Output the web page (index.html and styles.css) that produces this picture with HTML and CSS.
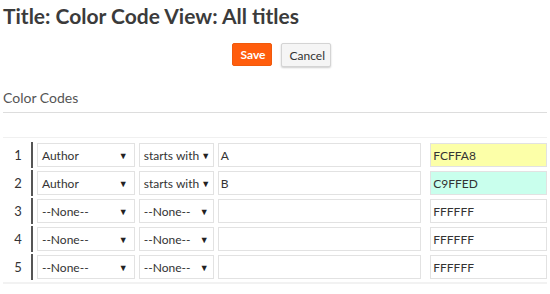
FILE: index.html
```html
<!DOCTYPE html>
<html>
<head>
<meta charset="utf-8">
<link rel="stylesheet" href="styles.css">
</head>
<body>
<h1 class="title">Title: Color Code View: All titles</h1>
<div class="actions">
  <button class="btn btn-save">Save</button>
  <button class="btn btn-cancel">Cancel</button>
</div>
<h2 class="section">Color Codes</h2>
<div class="rows">
  <div class="row">
    <span class="num">1</span><span class="bar"></span>
    <div class="sel sel-field"><span>Author</span><span class="arrow">▼</span></div>
    <div class="sel sel-op"><span>starts with</span><span class="arrow">▼</span></div>
    <div class="inp inp-val">A</div>
    <div class="inp inp-color" style="background:#FCFFA8">FCFFA8</div>
  </div>
  <div class="row">
    <span class="num">2</span><span class="bar"></span>
    <div class="sel sel-field"><span>Author</span><span class="arrow">▼</span></div>
    <div class="sel sel-op"><span>starts with</span><span class="arrow">▼</span></div>
    <div class="inp inp-val">B</div>
    <div class="inp inp-color" style="background:#C9FFED">C9FFED</div>
  </div>
  <div class="row">
    <span class="num">3</span><span class="bar"></span>
    <div class="sel sel-field"><span>--None--</span><span class="arrow">▼</span></div>
    <div class="sel sel-op"><span>--None--</span><span class="arrow">▼</span></div>
    <div class="inp inp-val"></div>
    <div class="inp inp-color">FFFFFF</div>
  </div>
  <div class="row">
    <span class="num">4</span><span class="bar"></span>
    <div class="sel sel-field"><span>--None--</span><span class="arrow">▼</span></div>
    <div class="sel sel-op"><span>--None--</span><span class="arrow">▼</span></div>
    <div class="inp inp-val"></div>
    <div class="inp inp-color">FFFFFF</div>
  </div>
  <div class="row">
    <span class="num">5</span><span class="bar"></span>
    <div class="sel sel-field"><span>--None--</span><span class="arrow">▼</span></div>
    <div class="sel sel-op"><span>--None--</span><span class="arrow">▼</span></div>
    <div class="inp inp-val"></div>
    <div class="inp inp-color">FFFFFF</div>
  </div>
</div>
</body>
</html>
```
FILE: styles.css
```css
* { box-sizing: border-box; }
body {
  margin: 0;
  padding: 0 3px;
  font-family: Lato, "Open Sans", sans-serif;
  color: #333;
  background: #fff;
}
.title {
  margin: 0;
  padding-top: 3px;
  font-size: 21px;
  font-weight: 700;
  line-height: 25px;
  color: #3b3b3b;
}
.actions {
  display: flex;
  justify-content: center;
  gap: 9px;
  margin-top: 15px;
  padding-left: 12px;
}
.btn {
  font-family: Lato, sans-serif;
  font-size: 12px;
  height: 23px;
  padding: 0 8px;
  border-radius: 2px;
}
.btn-save {
  background: #ff5d0d;
  color: #fff;
  font-weight: 700;
  border: 1px solid #f05a0c;
  width: 40px;
}
.btn-cancel {
  background: #f5f5f5;
  color: #333;
  border: 1px solid #d4d4d4;
  box-shadow: 0 1px 2px rgba(0,0,0,0.2);
  width: 50px;
  height: 24px;
}
.section {
  margin: 22px 0 0;
  padding-bottom: 5px;
  font-size: 14px;
  font-weight: 400;
  line-height: 18px;
  color: #555;
  border-bottom: 1px solid #ddd;
}
.rows {
  margin-top: 24px;
  border-top: 1px solid #f0f0f0;
  border-bottom: 2px solid #f2f2f2;
  padding: 5px 0 3px;
  display: flex;
  flex-direction: column;
  gap: 4px;
}
.row {
  display: flex;
  align-items: center;
  height: 24px;
  font-size: 12px;
  white-space: nowrap;
}
.num {
  width: 28px;
  text-align: center;
  padding-left: 2px;
  font-size: 13px;
}
.bar {
  width: 2px;
  height: 26px;
  background: #555;
  margin-right: 4px;
}
.sel, .inp {
  height: 24px;
  border: 1px solid #e2e2e2;
  display: flex;
  align-items: center;
  padding: 0 4px;
  color: #333;
  background: #fff;
}
.sel { justify-content: space-between; }
.sel-field { width: 98px; margin-right: 4px; padding-right: 6px; }
.sel-op { width: 75px; margin-right: 4px; padding-right: 4px; gap: 2px; }
.arrow { font-size: 9px; color: #222; flex: none; }
.inp-val { width: 204px; margin-right: 9px; padding-left: 2px; }
.inp-color { width: 117px; padding-left: 2px; }
```
